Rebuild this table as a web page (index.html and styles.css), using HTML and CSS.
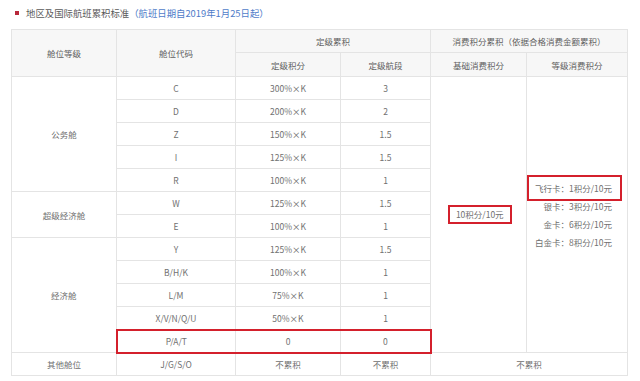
FILE: index.html
```html
<!DOCTYPE html>
<html lang="zh-CN">
<head>
<meta charset="utf-8">
<title>地区及国际航班累积标准</title>
<link rel="stylesheet" href="styles.css">
</head>
<body>
<div class="page">
  <div class="title">
    <span class="bullet"></span>
    <span class="title-main">地区及国际航班累积标准</span><span class="title-note">（航班日期自2019年1月25日起）</span>
  </div>
  <table class="rules">
    <colgroup>
      <col class="c1"><col class="c2"><col class="c3"><col class="c4"><col class="c5"><col class="c6">
    </colgroup>
    <thead>
      <tr class="h1">
        <th rowspan="2">舱位等级</th>
        <th rowspan="2">舱位代码</th>
        <th colspan="2">定级累积</th>
        <th colspan="2">消费积分累积（依据合格消费金额累积）</th>
      </tr>
      <tr class="h2">
        <th>定级积分</th>
        <th>定级航段</th>
        <th>基础消费积分</th>
        <th>等级消费积分</th>
      </tr>
    </thead>
    <tbody>
      <tr>
        <td rowspan="5">公务舱</td>
        <td>C</td><td>300%×K</td><td>3</td>
        <td rowspan="12"><span class="hl hl-base">10积分/10元</span></td>
        <td rowspan="12" class="cards">
          <div class="card-line first"><span class="hl hl-card">飞行卡：1积分/10元</span></div>
          <div class="card-line">银卡：3积分/10元</div>
          <div class="card-line">金卡：6积分/10元</div>
          <div class="card-line">白金卡：8积分/10元</div>
        </td>
      </tr>
      <tr><td>D</td><td>200%×K</td><td>2</td></tr>
      <tr><td>Z</td><td>150%×K</td><td>1.5</td></tr>
      <tr><td>I</td><td>125%×K</td><td>1.5</td></tr>
      <tr><td>R</td><td>100%×K</td><td>1</td></tr>
      <tr><td rowspan="2">超级经济舱</td><td>W</td><td>125%×K</td><td>1.5</td></tr>
      <tr><td>E</td><td>100%×K</td><td>1</td></tr>
      <tr><td rowspan="5">经济舱</td><td>Y</td><td>125%×K</td><td>1.5</td></tr>
      <tr><td>B/H/K</td><td>100%×K</td><td>1</td></tr>
      <tr><td>L/M</td><td>75%×K</td><td>1</td></tr>
      <tr><td>X/V/N/Q/U</td><td>50%×K</td><td>1</td></tr>
      <tr class="marked"><td class="m-l">P/A/T</td><td class="m-c">0</td><td class="m-r">0</td></tr>
      <tr><td>其他舱位</td><td>J/G/S/O</td><td>不累积</td><td>不累积</td><td colspan="2">不累积</td></tr>
    </tbody>
  </table>
</div>
</body>
</html>
```

FILE: styles.css
```css
html, body {
  margin: 0;
  padding: 0;
  background: #ffffff;
}

.page {
  padding: 0 12px 0 11px;
  font-family: "Noto Sans CJK SC", "Noto Sans", sans-serif;
  color: #6e6e6e;
}

.title {
  display: flex;
  align-items: center;
  height: 14px;
  padding-top: 6px;
  margin-bottom: 9px;
  font-size: 9.4px;
  line-height: 14px;
  white-space: nowrap;
}

.bullet {
  width: 4px;
  height: 4px;
  background: #b8283a;
  margin: 0 7px 0 4px;
  flex: none;
}

.title-main {
  color: #5a5a5a;
}

.title-note {
  color: #4f7cc9;
}

.rules {
  border-collapse: collapse;
  table-layout: fixed;
  width: 617px;
  font-size: 8.5px;
  color: #707070;
  border: 1px solid #d8d8d8;
}

.c1 { width: 105px; }
.c2 { width: 119px; }
.c3 { width: 105px; }
.c4 { width: 90px; }
.c5 { width: 96px; }
.c6 { width: 101px; }

.rules th,
.rules td {
  border: 1px solid #e4e4e4;
  text-align: center;
  vertical-align: middle;
  padding: 0;
  font-weight: normal;
  white-space: nowrap;
}

.rules th {
  background: #f7f7f7;
  color: #5e5e5e;
}

.h1 { height: 23px; }
.h2 { height: 24px; }

.rules tbody tr { height: 23px; }

.hl {
  border: 2px solid #d4202c;
  line-height: 13px;
  white-space: nowrap;
}

.hl-base {
  display: inline-block;
  padding: 1px 6px;
  margin-left: 2px;
}

.hl-card {
  padding: 5px 8px 5px 6px;
}

.rules td.cards {
  text-align: right;
  padding-right: 5px;
  padding-top: 1px;
}

.card-line {
  line-height: 18px;
  margin-right: 10px;
}

.card-line.first {
  margin-right: 0;
}

.rules tr.marked td {
  border-top: 2px solid #d4202c;
  border-bottom: 2px solid #d4202c;
}

.rules tr.marked td.m-l {
  border-left: 2px solid #d4202c;
}

.rules tr.marked td.m-r {
  border-right: 2px solid #d4202c;
}
```
